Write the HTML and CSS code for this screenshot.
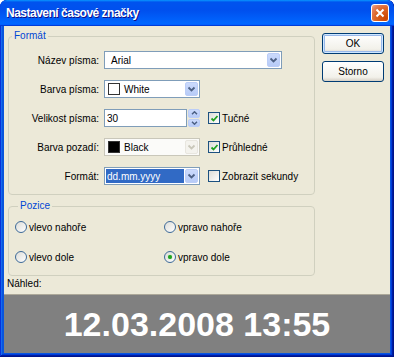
FILE: index.html
```html
<!DOCTYPE html>
<html lang="cs">
<head>
<meta charset="utf-8">
<title>Nastavení časové značky</title>
<link rel="stylesheet" href="styles.css">
</head>
<body>
<div class="window">
  <div class="titlebar">
    <span class="title">Nastavení časové značky</span>
    <span class="close"><svg width="10" height="10" viewBox="0 0 10 10"><path d="M1.5 1.5 L8.5 8.5 M8.5 1.5 L1.5 8.5" stroke="#fff" stroke-width="2" fill="none"/></svg></span>
  </div>
  <div class="client">
    <div class="main">
      <div class="groups">
        <fieldset class="group format">
          <legend>Formát</legend>
          <div class="form-grid">
            <span class="lbl">Název písma:</span>
            <div class="combo wide"><span class="value">Arial</span><span class="drop"><svg width="9" height="6" viewBox="0 0 9 6"><path d="M1.5 1.5 L4.5 4.5 L7.5 1.5" stroke="#4d6185" stroke-width="1.8" fill="none"/></svg></span></div>

            <span class="lbl">Barva písma:</span>
            <div class="combo"><span class="swatch white"></span><span class="value">White</span><span class="drop"><svg width="9" height="6" viewBox="0 0 9 6"><path d="M1.5 1.5 L4.5 4.5 L7.5 1.5" stroke="#4d6185" stroke-width="1.8" fill="none"/></svg></span></div>
            <span></span>

            <span class="lbl">Velikost písma:</span>
            <div class="spinrow">
              <div class="edit">30</div>
              <div class="spin">
                <span class="sb"><svg width="7" height="4" viewBox="0 0 7 4"><path d="M1 3.2 L3.5 0.8 L6 3.2" stroke="#4d6185" stroke-width="1.5" fill="none"/></svg></span>
                <span class="sb"><svg width="7" height="4" viewBox="0 0 7 4"><path d="M1 0.8 L3.5 3.2 L6 0.8" stroke="#4d6185" stroke-width="1.5" fill="none"/></svg></span>
              </div>
            </div>
            <div class="check"><span class="box"><svg width="9" height="9" viewBox="0 0 9 9"><path d="M1.5 4.5 L3.5 6.5 L7.5 2" stroke="#21a121" stroke-width="1.8" fill="none"/></svg></span><span>Tučné</span></div>

            <span class="lbl">Barva pozadí:</span>
            <div class="combo disabled"><span class="swatch black"></span><span class="value">Black</span><span class="drop"><svg width="9" height="6" viewBox="0 0 9 6"><path d="M1.5 1.5 L4.5 4.5 L7.5 1.5" stroke="#c9c7ba" stroke-width="1.8" fill="none"/></svg></span></div>
            <div class="check"><span class="box"><svg width="9" height="9" viewBox="0 0 9 9"><path d="M1.5 4.5 L3.5 6.5 L7.5 2" stroke="#21a121" stroke-width="1.8" fill="none"/></svg></span><span>Průhledné</span></div>

            <span class="lbl">Formát:</span>
            <div class="combo"><span class="value selected">dd.mm.yyyy</span><span class="drop"><svg width="9" height="6" viewBox="0 0 9 6"><path d="M1.5 1.5 L4.5 4.5 L7.5 1.5" stroke="#4d6185" stroke-width="1.8" fill="none"/></svg></span></div>
            <div class="check"><span class="box"></span><span>Zobrazit sekundy</span></div>
          </div>
        </fieldset>

        <fieldset class="group pozice">
          <legend>Pozice</legend>
          <div class="radio-grid">
            <div class="radio-item"><span class="radio"></span><span>vlevo nahoře</span></div>
            <div class="radio-item"><span class="radio"></span><span>vpravo nahoře</span></div>
            <div class="radio-item"><span class="radio"></span><span>vlevo dole</span></div>
            <div class="radio-item"><span class="radio on"><span class="dot"></span></span><span>vpravo dole</span></div>
          </div>
        </fieldset>
      </div>
      <div class="buttons">
        <div class="btn default">OK</div>
        <div class="btn">Storno</div>
      </div>
    </div>
    <div class="preview-label">Náhled:</div>
    <div class="preview">12.03.2008 13:55</div>
  </div>
</div>
</body>
</html>
```

FILE: styles.css
```css
* { box-sizing: border-box; margin: 0; padding: 0; }
html, body { width: 394px; height: 357px; background: #ffffff; overflow: hidden; }
body { font-family: "Liberation Sans", Arial, sans-serif; font-size: 10px; color: #000; }

.window {
  width: 394px;
  height: 357px;
  display: flex;
  flex-direction: column;
  background: #0855dd;
  border-radius: 7px 7px 0 0;
  box-shadow: inset -1px -1px #00138c, inset 1px 1px #0831d9, inset -2px -2px #001ea0, inset 2px 2px #166aee, inset -3px -3px #003bda, inset 3px 3px #0855dd;
  overflow: hidden;
}

.titlebar {
  height: 26px;
  flex: none;
  display: flex;
  align-items: center;
  padding: 0 5px 0 6px;
  border-radius: 7px 7px 0 0;
  background: linear-gradient(180deg, #0997ff, #0053ee 8%, #0050ee 40%, #06f 88%, #06f 93%, #005bff 95%, #003dd7 96%, #003dd7);
}
.title {
  flex: 1;
  color: #fff;
  font-weight: bold;
  font-size: 12px;
  letter-spacing: -0.5px;
  text-shadow: 1px 1px #0f1089;
}
.close {
  width: 18px;
  height: 18px;
  border: 1px solid #fff;
  border-radius: 3px;
  display: flex;
  align-items: center;
  justify-content: center;
  background: radial-gradient(circle at 85% 85%, #cc4600, #dc6527 55%, #e5815d 80%, #f3ad92);
}

.client {
  flex: 1;
  margin: 0 4px 4px;
  background: #ece9d8;
  display: flex;
  flex-direction: column;
}

.main { display: flex; padding-left: 4px; }
.groups { width: 307px; padding-top: 4px; }

.group {
  border: 1px solid #d0d0bf;
  border-radius: 4px;
}
.group legend {
  color: #0046d5;
  line-height: 12px;
  padding: 0 2px;
  margin-left: 3px;
}
.format { padding: 9px 0 9px 0; }
.pozice { margin-top: 5px; padding: 8px 0 11px 6px; }

.form-grid {
  display: grid;
  grid-template-columns: 91px 96px 1fr;
  grid-auto-rows: 18px;
  row-gap: 11px;
  column-gap: 4px;
  align-items: center;
}
.lbl { text-align: right; padding-right: 1px; white-space: nowrap; }

.combo {
  height: 18px;
  border: 1px solid #7f9db9;
  background: #fff;
  display: flex;
  align-items: center;
  padding: 1px;
  width: 96px;
}
.combo.wide { grid-column: 2 / 4; width: 178px; }
.combo .value { flex: 1; padding-left: 5px; white-space: nowrap; }
.combo .value.selected {
  align-self: stretch;
  background: #316ac5;
  color: #fff;
  padding-left: 1px;
  margin-right: 1px;
  display: flex;
  align-items: center;
}
.swatch {
  width: 12px;
  height: 12px;
  margin-left: 2px;
  border: 1px solid #333;
  flex: none;
}
.swatch + .value { padding-left: 4px; }
.swatch.white { background: #fff; }
.swatch.black { background: #000; }
.drop {
  width: 13px;
  align-self: stretch;
  flex: none;
  display: flex;
  align-items: center;
  justify-content: center;
  border: 1px solid #bbcdf7;
  border-radius: 2px;
  background: linear-gradient(180deg, #cbdafc, #b7cbf7);
}
.combo.disabled { border-color: #c9c7ba; background: #fbfbf9; }
.combo.disabled .drop { border-color: #e8e6df; background: #f4f3ee; }

.spinrow { display: flex; align-items: center; width: 96px; height: 18px; }
.edit {
  width: 83px;
  height: 18px;
  border: 1px solid #7f9db9;
  background: #fff;
  padding-left: 2px;
  display: flex;
  align-items: center;
}
.spin {
  margin-left: 1px;
  width: 12px;
  height: 18px;
  display: flex;
  flex-direction: column;
  gap: 1px;
}
.sb {
  flex: 1;
  display: flex;
  align-items: center;
  justify-content: center;
  border: 1px solid #bbcdf7;
  border-radius: 2px;
  background: linear-gradient(180deg, #cbdafc, #b7cbf7);
}

.check { display: flex; align-items: center; gap: 2px; margin-left: 4px; white-space: nowrap; }
.box {
  width: 12px;
  height: 12px;
  border: 1px solid #1c5180;
  background: linear-gradient(135deg, #dcdcd7, #fff);
  display: flex;
  align-items: center;
  justify-content: center;
  flex: none;
}

.radio-grid {
  display: grid;
  grid-template-columns: 149px 1fr;
  grid-auto-rows: 14px;
  row-gap: 16px;
}
.radio-item { display: flex; align-items: center; gap: 2px; white-space: nowrap; }
.radio {
  width: 12px;
  height: 12px;
  border-radius: 50%;
  border: 1px solid #3d6a99;
  background: linear-gradient(135deg, #dcdcd7, #fff);
  display: flex;
  align-items: center;
  justify-content: center;
  flex: none;
}
.dot {
  width: 4px;
  height: 4px;
  border-radius: 50%;
  background: #21a121;
  box-shadow: 0 0 1px #5bd35b;
}

.buttons {
  margin-left: 7px;
  padding-top: 7px;
  display: flex;
  flex-direction: column;
  gap: 7px;
}
.btn {
  width: 62px;
  height: 21px;
  border: 1px solid #003c74;
  border-radius: 3px;
  background: linear-gradient(180deg, #fff, #f2f1ea 80%, #d6d0c5);
  display: flex;
  align-items: center;
  justify-content: center;
}
.btn.default { box-shadow: inset 0 0 0 1px #cee7ff, inset 0 0 0 2px #98b8ea; }

.preview-label { margin-top: 2px; padding-left: 3px; line-height: 12px; }
.preview {
  margin-top: 4px;
  flex: 1;
  background: #808080;
  border-top: 1px solid #aca899;
  color: #fff;
  font-weight: bold;
  font-size: 34px;
  display: flex;
  align-items: center;
  justify-content: center;
}
```
